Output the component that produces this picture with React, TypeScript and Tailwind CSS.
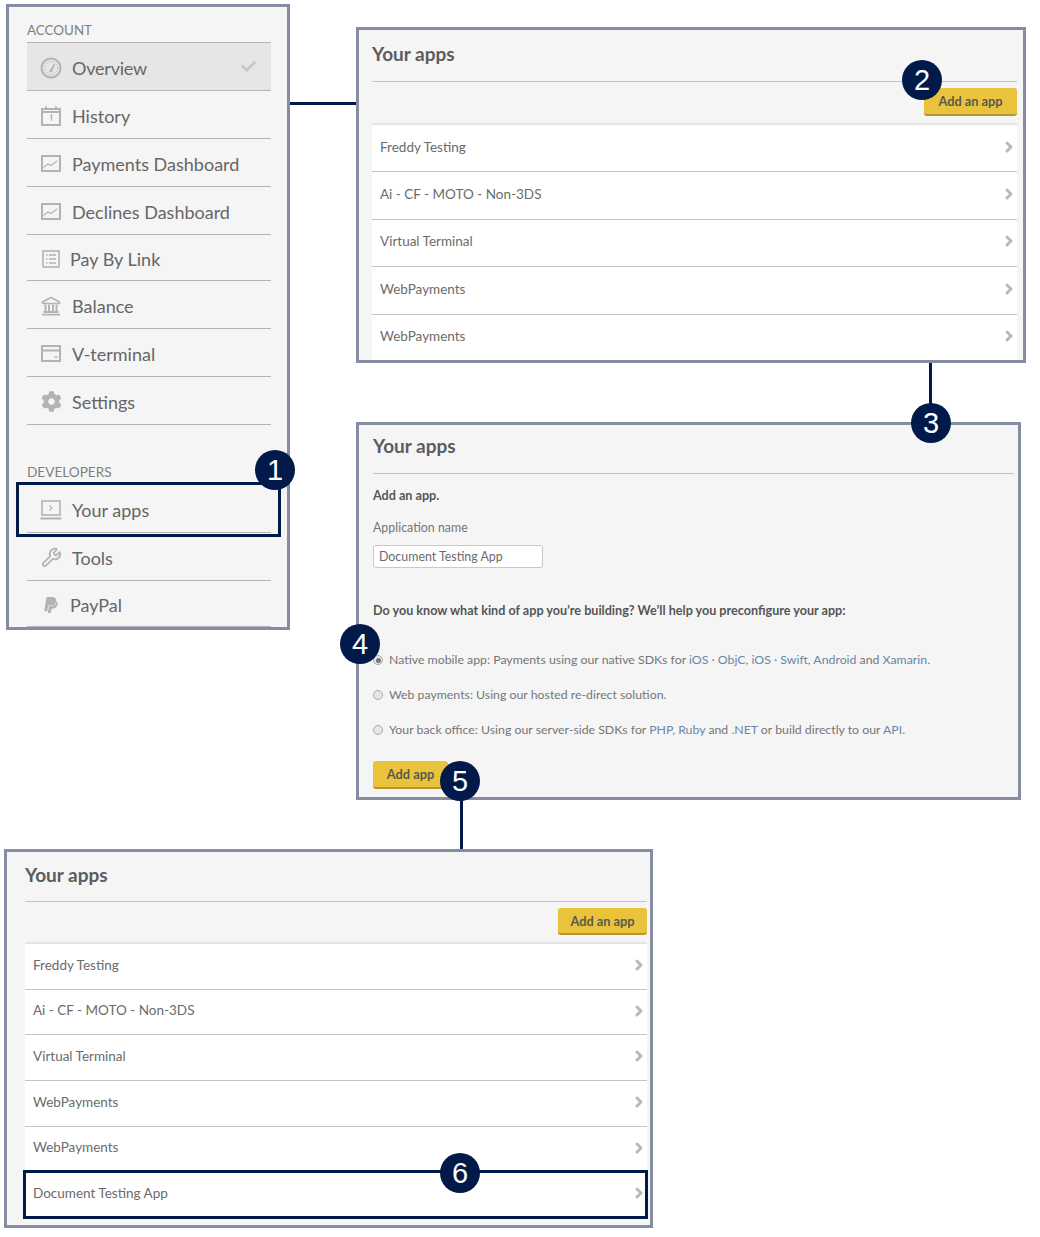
import type { ReactNode } from "react";
import { Wrench, ChevronRight } from "lucide-react";
import { FaPaypal, FaCog, FaCheck } from "react-icons/fa";

const iconColor = "#b3b3b3";

function GaugeIcon() {
  return (
    <svg width="22" height="22" viewBox="0 0 22 22" fill="none" stroke={iconColor}>
      <circle cx="11" cy="11" r="9.5" strokeWidth="2" />
      <circle cx="11" cy="11" r="6.5" strokeWidth="1" strokeDasharray="1.5 2" />
      <path d="M9.5 14.5 L14.5 7 L11.5 15 Z" fill={iconColor} strokeWidth="1" />
    </svg>
  );
}

function CalendarIcon() {
  return (
    <svg width="20" height="20" viewBox="0 0 20 20" fill="none" stroke={iconColor}>
      <rect x="1" y="3" width="18" height="16" strokeWidth="2" />
      <path d="M1 6h18" strokeWidth="2" />
      <path d="M5 0.5v3M15 0.5v3" strokeWidth="2" />
      <path d="M9 10l1.5-1v6" strokeWidth="1.3" />
    </svg>
  );
}

function ChartIcon() {
  return (
    <svg width="20" height="17" viewBox="0 0 20 17" fill="none" stroke={iconColor}>
      <rect x="1" y="1" width="18" height="15" strokeWidth="2" />
      <path d="M2.5 12.5 L7 9 L10 10.5 L16 6" strokeWidth="1.2" />
    </svg>
  );
}

function ListIcon() {
  return (
    <svg width="18" height="18" viewBox="0 0 18 18" fill="none" stroke={iconColor}>
      <rect x="1" y="1" width="16" height="16" strokeWidth="1.6" />
      <path d="M4 5h1.5M7 5h7M4 9h1.5M7 9h7M4 13h1.5M7 13h7" strokeWidth="1.3" />
    </svg>
  );
}

function BankIcon() {
  return (
    <svg width="20" height="20" viewBox="0 0 20 20" fill="none" stroke={iconColor}>
      <path d="M10 1.5 L18.5 6 V7.5 H1.5 V6 Z" strokeWidth="1.6" strokeLinejoin="round" />
      <path d="M4.5 8.5v6.5M8 8.5v6.5M12 8.5v6.5M15.5 8.5v6.5" strokeWidth="2" />
      <path d="M2.5 16h15M1 18.7h18" strokeWidth="1.8" />
    </svg>
  );
}

function CardIcon() {
  return (
    <svg width="20" height="17" viewBox="0 0 20 17" fill="none" stroke={iconColor}>
      <rect x="1" y="1" width="18" height="15" strokeWidth="2" />
      <path d="M1 5.5h18" strokeWidth="2" />
      <path d="M13.5 12h3" strokeWidth="1.5" />
    </svg>
  );
}

function LaptopIcon() {
  return (
    <svg width="22" height="20" viewBox="0 0 22 20" fill="none" stroke={iconColor}>
      <rect x="2" y="1" width="18" height="14" strokeWidth="1.6" />
      <path d="M9.5 5.5 L12 8 L9.5 10.5" strokeWidth="1.2" />
      <path d="M0.5 18.5h21" strokeWidth="2" />
    </svg>
  );
}

function Badge({ n, className }: { n: number; className: string }) {
  return (
    <div
      className={`absolute z-20 flex h-10 w-10 items-center justify-center rounded-full bg-[#011a49] font-['Liberation_Sans',sans-serif] text-[29px] leading-none text-white ${className}`}
    >
      {n}
    </div>
  );
}

function NavRow({
  icon,
  label,
  h = "h-12",
  narrow,
  selected,
}: {
  icon: ReactNode;
  label: string;
  h?: string;
  narrow?: boolean;
  selected?: boolean;
}) {
  return (
    <div
      className={`flex ${h} items-center border-b border-[#b4b4b4] pl-[13px] pr-[15px] ${selected ? "bg-[#e6e6e6]" : ""}`}
    >
      <div className="flex w-[22px] shrink-0 items-center justify-center pt-[2px]">{icon}</div>
      <span className={`flex-1 pt-[3px] text-[18px] text-[#666] ${narrow ? "ml-[8px]" : "ml-[10px]"} ${selected ? "tracking-[-0.2px]" : ""}`}>
        {label}
      </span>
      {selected && <FaCheck size={15} color="#c8c8c8" />}
    </div>
  );
}

function AppRow({ label, h }: { label: string; h: string }) {
  return (
    <div className={`flex ${h} items-center justify-between border-b border-[#c4c4c4] bg-white pb-[3px] pl-2 text-[13.5px] text-[#6b6b6b]`}>
      <span>{label}</span>
      <ChevronRight size={16} strokeWidth={4.5} color="#b9b9b9" />
    </div>
  );
}

function YellowButton({ label, className }: { label: string; className: string }) {
  return (
    <div
      className={`flex items-center justify-center rounded-[3px] border-b-2 border-[#b8962f] bg-[#e9c33c] pt-[2px] text-[12.8px] font-bold text-[#5a5950] ${className}`}
    >
      {label}
    </div>
  );
}

const apps = ["Freddy Testing", "Ai - CF - MOTO - Non-3DS", "Virtual Terminal", "WebPayments", "WebPayments"];

function Radio({ checked }: { checked?: boolean }) {
  return (
    <span className="flex h-[10px] w-[10px] shrink-0 items-center justify-center rounded-full border border-[#a9a9a9] bg-[#e6e6e6]">
      {checked && <span className="h-[5px] w-[5px] rounded-full bg-[#777]" />}
    </span>
  );
}

function L({ children }: { children: ReactNode }) {
  return <span className="text-[#6a86a8]">{children}</span>;
}

export default function App() {
  return (
    <div className="relative h-[1237px] w-[1040px] overflow-hidden bg-white font-['Lato',sans-serif]">
      {/* connectors */}
      <div className="absolute left-[290px] top-[102px] h-[3px] w-[66px] bg-[#011a49]" />
      <div className="absolute left-[929px] top-[363px] h-[59px] w-[3px] bg-[#011a49]" />
      <div className="absolute left-[460px] top-[800px] h-[49px] w-[3px] bg-[#011a49]" />

      {/* sidebar */}
      <div className="absolute left-[6px] top-[4px] h-[626px] w-[284px] border-[3px] border-[#868da3] bg-[#f5f5f5] pl-[18px] pr-[16px] pt-[13px]">
        <div className="h-[22px] text-[13.4px] leading-[20px] text-[#808080]">ACCOUNT</div>
        <div className="border-t border-[#b4b4b4]">
          <NavRow selected icon={<GaugeIcon />} label="Overview" />
          <NavRow icon={<CalendarIcon />} label="History" />
          <NavRow icon={<ChartIcon />} label="Payments Dashboard" />
          <NavRow icon={<ChartIcon />} label="Declines Dashboard" />
          <NavRow icon={<ListIcon />} label="Pay By Link" h="h-[46px]" narrow />
          <NavRow icon={<BankIcon />} label="Balance" />
          <NavRow icon={<CardIcon />} label="V-terminal" />
          <NavRow icon={<FaCog size={21} color={iconColor} />} label="Settings" />
        </div>
        <div className="mt-[37px] h-[23px] text-[13.6px] leading-[20px] text-[#808080]">DEVELOPERS</div>
        <NavRow icon={<LaptopIcon />} label="Your apps" />
        <NavRow icon={<Wrench size={21} strokeWidth={2} color={iconColor} />} label="Tools" />
        <NavRow icon={<FaPaypal size={18} color={iconColor} />} label="PayPal" h="h-[46px]" narrow />
      </div>
      <div className="absolute left-[16px] top-[482px] z-10 h-[55px] w-[265px] border-[3px] border-[#011a49]" />
      <Badge n={1} className="left-[255px] top-[450px]" />

      {/* your apps list */}
      <div className="absolute left-[356px] top-[27px] h-[336px] w-[670px] overflow-hidden border-[3px] border-[#868da3] bg-[#f5f5f5] pl-[13px] pr-[6px]">
        <div className="h-[52px] border-b border-[#c4c4c4] pt-[11px] text-[19px] font-bold leading-[26px] text-[#5c5c5c]">Your apps</div>
        <div className="flex h-[43px] items-start justify-end border-b-2 border-[#e4e4e4] pt-[6px]">
          <YellowButton label="Add an app" className="h-[28px] w-[93px]" />
        </div>
        {apps.map((a, i) => (
          <AppRow key={i} label={a} h="h-[47.4px]" />
        ))}
      </div>
      <Badge n={2} className="left-[902px] top-[60px]" />
      <Badge n={3} className="left-[911px] top-[403px]" />

      {/* add an app form */}
      <div className="absolute left-[356px] top-[422px] h-[378px] w-[665px] border-[3px] border-[#868da3] bg-[#f5f5f5] pl-[14px] pr-[4px] text-[12.3px] text-[#767676]">
        <div className="h-[49px] border-b border-[#c4c4c4] pt-[8px] text-[19px] font-bold leading-[26px] text-[#5c5c5c]">Your apps</div>
        <div className="mt-[14px] text-[12.6px] font-bold leading-[16px] text-[#555]">Add an app.</div>
        <div className="mt-[16px] text-[12.4px] leading-[16px]">Application name</div>
        <div className="mt-[9px] flex h-[23px] w-[170px] items-center rounded-[3px] border border-[#c9c9c9] bg-white pl-[5px] pt-[2px] text-[12.4px] text-[#6b6b6b]">
          Document Testing App
        </div>
        <div className="mt-[35px] text-[12.6px] font-bold leading-[16px] text-[#555]">
          Do you know what kind of app you’re building? We’ll help you preconfigure your app:
        </div>
        <div className="mt-[33px] flex h-4 items-center gap-[6px]">
          <Radio checked />
          <span>
            Native mobile app: Payments using our native SDKs for <L>iOS · ObjC</L>, <L>iOS · Swift</L>, <L>Android</L> and <L>Xamarin</L>.
          </span>
        </div>
        <div className="mt-[19px] flex h-4 items-center gap-[6px]">
          <Radio />
          <span>Web payments: Using our hosted re-direct solution.</span>
        </div>
        <div className="mt-[19px] flex h-4 items-center gap-[6px]">
          <Radio />
          <span>
            Your back office: Using our server-side SDKs for <L>PHP</L>, <L>Ruby</L> and <L>.NET</L> or build directly to our <L>API</L>.
          </span>
        </div>
        <YellowButton label="Add app" className="mt-[23px] h-[28px] w-[75px]" />
      </div>
      <Badge n={4} className="left-[340px] top-[624px]" />
      <Badge n={5} className="left-[440px] top-[761px]" />

      {/* list with the new app */}
      <div className="absolute left-[4px] top-[849px] h-[379px] w-[649px] overflow-hidden border-[3px] border-[#868da3] bg-[#f5f5f5] pl-[18px] pr-[3px]">
        <div className="h-[50px] border-b border-[#c4c4c4] pt-[10px] text-[19px] font-bold leading-[26px] text-[#5c5c5c]">Your apps</div>
        <div className="flex h-[42px] items-start justify-end border-b-2 border-[#e4e4e4] pt-[6px]">
          <YellowButton label="Add an app" className="h-[27px] w-[89px]" />
        </div>
        {[...apps, "Document Testing App"].map((a, i) => (
          <AppRow key={i} label={a} h="h-[45.7px]" />
        ))}
      </div>
      <div className="absolute left-[23px] top-[1170px] z-10 h-[49px] w-[625px] border-[3px] border-[#011a49]" />
      <Badge n={6} className="left-[440px] top-[1153px]" />
    </div>
  );
}
